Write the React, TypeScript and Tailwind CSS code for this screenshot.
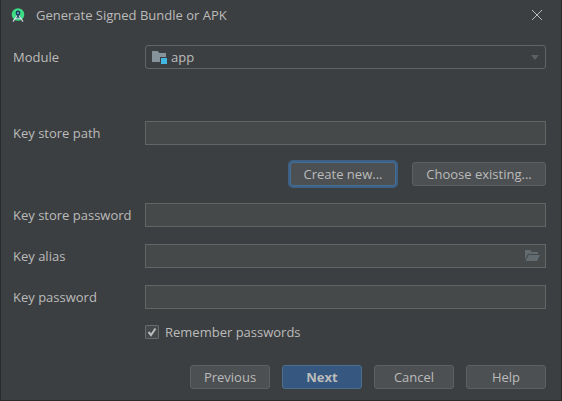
import type { ComponentProps, ReactNode } from "react";
import { clsx } from "clsx";

function AndroidStudioIcon() {
  return (
    <svg className="size-4 shrink-0" viewBox="0 0 16 16" aria-hidden="true">
      <circle cx="8" cy="7.5" r="6.3" fill="#3ddc84" />
      <path d="M4 13 6.8 7.5h2.4L12 13l-1.8-1.6H5.8Z" fill="#1c4a5c" />
      <circle cx="8" cy="6" r="2.4" fill="#173b59" />
      <circle cx="8" cy="6" r="1" fill="#67b7d8" />
      <path d="m7 8.500-4 6.100M9 8.500l4 6.100" stroke="#d5e2e6" strokeWidth="1.1" />
      <path d="M4.5 12C6.500 10.800 9.500 10.800 11.500 12" stroke="#d5e2e6" fill="none" />
    </svg>
  );
}

function ModuleIcon() {
  return (
    <svg className="size-4 shrink-0" viewBox="0 0 16 16" aria-hidden="true">
      <path d="M1 2h5.500l2 2H15v4H9v5H1Z" fill="#87939a" />
      <path d="M10 9h6v6h-6Z" fill="#40b6e0" />
    </svg>
  );
}

function OpenFolderIcon() {
  return (
    <svg className="size-4" viewBox="0 0 16 16" aria-hidden="true">
      <path d="M1 2h5l2 2h6v2H4L1 11.500Z" fill="#626b70" />
      <path d="M4.500 7H16l-3 6H1.500Z" fill="#626b70" />
    </svg>
  );
}

const box = "h-6 w-full rounded-none border border-[#646464] bg-[#45494a] px-1.5 text-[#bbbbbb] outline-none";

function Row({ id, label, children }: { id: string; label: string; children: ReactNode }) {
  return (
    <div className="flex items-center">
      <label htmlFor={id} className="w-33 shrink-0 whitespace-nowrap">{label}</label>
      <div className="relative flex flex-1">{children}</div>
    </div>
  );
}

function Button({ className, ...props }: ComponentProps<"button">) {
  return (
    <button
      type="button"
      className={clsx("flex h-6 items-center justify-center rounded-[3px] border whitespace-nowrap", className)}
      {...props}
    />
  );
}

const plain = "border-[#5e6060] bg-[#4c5052]";

export default function App() {
  return (
    <main className="border-x border-b border-[#2b2b2b] bg-[#3c3f41] font-['Open_Sans','Noto_Sans',sans-serif] text-[13px] leading-5 text-[#bbbbbb]">
      <header className="flex h-[30px] items-center pr-4 pl-[9px]">
        <AndroidStudioIcon />
        <h1 className="ml-2.5 flex-1">Generate Signed Bundle or APK</h1>
        <button type="button" aria-label="Close" className="flex size-4 items-center justify-center">
          <svg className="size-3" viewBox="0 0 12 12" aria-hidden="true">
            <path d="m1 1 10 10M11 1 1 11" stroke="#bbbbbb" fill="none" />
          </svg>
        </button>
      </header>

      <form className="pt-[15px] pr-[15px] pb-[11px] pl-3">
        <Row id="module" label="Module">
          <select
            id="module"
            defaultValue="app"
            className="h-6 w-full appearance-none rounded-[3px] border border-[#646464] bg-[#3c3f41] pl-[25px] text-[#bbbbbb] outline-none"
          >
            <option value="app">app</option>
          </select>
          <span className="pointer-events-none absolute inset-y-0 left-1.5 flex items-center"><ModuleIcon /></span>
          <span className="pointer-events-none absolute inset-y-0 right-1.5 flex items-center">
            <svg className="h-[5px] w-2.5" viewBox="0 0 10 5" aria-hidden="true">
              <path d="M1 0h8L5 5Z" fill="#5e6060" />
            </svg>
          </span>
        </Row>

        <div className="mt-13">
          <Row id="path" label="Key store path">
            <input id="path" type="text" className={box} />
          </Row>
        </div>

        <div className="mt-[17px] flex justify-end gap-4">
          <Button className="w-[106px] border-[#466d94] bg-[#4c5052] ring-2 ring-[#3d6185]">Create new...</Button>
          <Button className={clsx("w-[134px]", plain)}>Choose existing...</Button>
        </div>

        <div className="mt-[17px] flex flex-col gap-[17px]">
          <Row id="store-password" label="Key store password">
            <input id="store-password" type="password" className={box} />
          </Row>
          <Row id="alias" label="Key alias">
            <input id="alias" type="text" className={clsx(box, "pr-7")} />
            <button type="button" aria-label="Browse key aliases" className="absolute inset-y-0 right-1.5 flex items-center">
              <OpenFolderIcon />
            </button>
          </Row>
          <Row id="key-password" label="Key password">
            <input id="key-password" type="password" className={box} />
          </Row>
        </div>

        <div className="mt-[13px] ml-33 flex">
          <label className="flex items-center gap-1.5">
            <span className="relative flex size-3.5">
              <input
                type="checkbox"
                defaultChecked
                className="peer size-3.5 appearance-none rounded-[1px] border border-[#6b6b6b] bg-[#43494a]"
              />
              <svg className="pointer-events-none absolute inset-0 hidden size-3.5 peer-checked:block" viewBox="0 0 14 14" aria-hidden="true">
                <path d="m3.500 7 2.500 3 4.500-6.500" stroke="#bbbbbb" strokeWidth="2" fill="none" />
              </svg>
            </span>
            Remember passwords
          </label>
        </div>

        <div className="mt-[23px] flex justify-end gap-3">
          <Button className={clsx("w-20", plain)}>Previous</Button>
          <Button className="w-20 border-[#4c708c] bg-[#365880] font-bold">Next</Button>
          <Button className={clsx("w-20", plain)}>Cancel</Button>
          <Button className={clsx("w-20", plain)}>Help</Button>
        </div>
      </form>
    </main>
  );
}
